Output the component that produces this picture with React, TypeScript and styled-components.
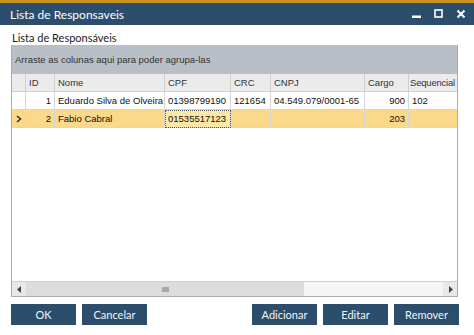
import styled, { createGlobalStyle } from "styled-components";

type Person = {
  id: number;
  nome: string;
  cpf: string;
  crc: string;
  cnpj: string;
  cargo: string;
  sequencial: string;
};

const people: Person[] = [
  {
    id: 1,
    nome: "Eduardo Silva de Olveira",
    cpf: "01398799190",
    crc: "121654",
    cnpj: "04.549.079/0001-65",
    cargo: "900",
    sequencial: "102",
  },
  {
    id: 2,
    nome: "Fabio Cabral",
    cpf: "01535517123",
    crc: "",
    cnpj: "",
    cargo: "203",
    sequencial: "",
  },
];

const COLS = "14px 29px 110px 66px 40px 94px 44px 1fr";

function App() {
  return (
    <>
      <GlobalStyle />
      <Window>
        <TitleBar>
          <Title>Lista de Responsaveis</Title>
          <WindowControls>
            <ControlButton aria-label="minimizar">
              <svg width="10" height="10" viewBox="0 0 10 10">
                <rect x="0" y="6.5" width="9" height="2.5" fill="#fff" />
              </svg>
            </ControlButton>
            <ControlButton aria-label="maximizar">
              <svg width="10" height="10" viewBox="0 0 10 10">
                <rect x="1" y="1" width="7" height="7" fill="none" stroke="#fff" strokeWidth="1.6" />
              </svg>
            </ControlButton>
            <ControlButton aria-label="fechar">
              <svg width="10" height="10" viewBox="0 0 10 10">
                <path d="M1.5 1.5 L8.5 8.5 M8.5 1.5 L1.5 8.5" stroke="#fff" strokeWidth="2" />
              </svg>
            </ControlButton>
          </WindowControls>
        </TitleBar>
        <Body>
          <Caption>Lista de Responsáveis</Caption>
          <Grid>
            <GroupPanel>Arraste as colunas aqui para poder agrupa-las</GroupPanel>
            <HeaderRow>
              <HeaderCell />
              <HeaderCell>ID</HeaderCell>
              <HeaderCell>Nome</HeaderCell>
              <HeaderCell>CPF</HeaderCell>
              <HeaderCell>CRC</HeaderCell>
              <HeaderCell>CNPJ</HeaderCell>
              <HeaderCell>Cargo</HeaderCell>
              <HeaderCell>Sequencial</HeaderCell>
            </HeaderRow>
            {people.map((p, i) => {
              const selected = i === 1;
              return (
                <DataRow key={p.id} $selected={selected}>
                  <Indicator>
                    {selected && (
                      <svg width="6" height="8" viewBox="0 0 6 8">
                        <path d="M1 1 L4.5 4 L1 7" fill="none" stroke="#333" strokeWidth="1.6" />
                      </svg>
                    )}
                  </Indicator>
                  <Cell $right>{p.id}</Cell>
                  <Cell>{p.nome}</Cell>
                  <Cell $focused={selected}>{p.cpf}</Cell>
                  <Cell>{p.crc}</Cell>
                  <Cell>{p.cnpj}</Cell>
                  <Cell $right>{p.cargo}</Cell>
                  <Cell>{p.sequencial}</Cell>
                </DataRow>
              );
            })}
            <EmptyArea />
            <HScroll>
              <ScrollArrow>
                <svg width="5" height="7" viewBox="0 0 5 7">
                  <path d="M4 0 L0 3.5 L4 7 Z" fill="#444" />
                </svg>
              </ScrollArrow>
              <ScrollThumb>
                <Grip />
              </ScrollThumb>
              <ScrollTrack />
              <ScrollArrow>
                <svg width="5" height="7" viewBox="0 0 5 7">
                  <path d="M1 0 L5 3.5 L1 7 Z" fill="#444" />
                </svg>
              </ScrollArrow>
            </HScroll>
          </Grid>
          <Footer>
            <ButtonGroup>
              <Button>OK</Button>
              <Button>Cancelar</Button>
            </ButtonGroup>
            <ButtonGroup>
              <Button>Adicionar</Button>
              <Button>Editar</Button>
              <Button>Remover</Button>
            </ButtonGroup>
          </Footer>
        </Body>
      </Window>
    </>
  );
}

const GlobalStyle = createGlobalStyle`
  html, body {
    margin: 0;
    padding: 0;
    background: #fff;
  }
  body {
    font-family: "Liberation Sans", Arial, sans-serif;
  }
`;

const Window = styled.div`
  width: 474px;
  height: 335px;
  display: flex;
  flex-direction: column;
  background: #fff;
  overflow: hidden;
`;

const TitleBar = styled.div`
  height: 22px;
  border-top: 3px solid #c8931e;
  background: #2c4d6c;
  display: flex;
  align-items: center;
  justify-content: space-between;
  padding: 0 8px 0 10px;
`;

const Title = styled.div`
  color: #fff;
  font-family: Lato, "Noto Sans", sans-serif;
  font-size: 12px;
`;

const WindowControls = styled.div`
  display: flex;
  align-items: center;
  gap: 12px;
`;

const ControlButton = styled.div`
  width: 10px;
  height: 10px;
  display: flex;
`;

const Body = styled.div`
  flex: 1;
  display: flex;
  flex-direction: column;
  padding: 6px 16px 10px 11px;
`;

const Caption = styled.div`
  font-family: Lato, "Noto Sans", sans-serif;
  font-size: 11px;
  color: #222;
  height: 14px;
  line-height: 14px;
  padding-left: 1px;
`;

const Grid = styled.div`
  height: 251px;
  display: flex;
  flex-direction: column;
  border: 1px solid #a9acaf;
  border-top: none;
  font-size: 9.5px;
  color: #111;
`;

const GroupPanel = styled.div`
  height: 29px;
  background: #b9bfc6;
  color: #333;
  display: flex;
  align-items: center;
  padding-left: 3px;
`;

const RowBase = styled.div`
  display: grid;
  grid-template-columns: ${COLS};
  height: 18px;
`;

const HeaderRow = styled(RowBase)`
  background: #ebebeb;
`;

const HeaderCell = styled.div`
  border-right: 1px solid #cfcfcf;
  border-bottom: 1px solid #cfcfcf;
  padding: 0 3px;
  display: flex;
  align-items: center;
  white-space: nowrap;
  overflow: hidden;
  color: #333;
  &:last-child {
    border-right: none;
    padding: 0 1px;
    letter-spacing: -0.2px;
  }
`;

const DataRow = styled(RowBase)<{ $selected?: boolean }>`
  background: ${(p) => (p.$selected ? "#fbd98b" : "#fff")};
`;

const Cell = styled.div<{ $right?: boolean; $focused?: boolean }>`
  border-right: 1px solid #d6d6d6;
  border-bottom: 1px solid #d6d6d6;
  padding: 0 3px;
  display: flex;
  align-items: center;
  justify-content: ${(p) => (p.$right ? "flex-end" : "flex-start")};
  white-space: nowrap;
  overflow: hidden;
  ${(p) =>
    p.$focused &&
    `
    background: #fde7a6;
    outline: 1px dotted #555;
    outline-offset: -1px;
  `}
  &:last-child {
    border-right: none;
  }
`;

const Indicator = styled.div`
  border-right: 1px solid #d6d6d6;
  border-bottom: 1px solid #d6d6d6;
  display: flex;
  align-items: center;
  justify-content: center;
`;

const EmptyArea = styled.div`
  flex: 1;
  background: #fff;
`;

const HScroll = styled.div`
  height: 14px;
  display: flex;
  background: #f0f0f0;
  border-top: 1px solid #d0d0d0;
`;

const ScrollArrow = styled.div`
  width: 14px;
  display: flex;
  align-items: center;
  justify-content: center;
  background: #e8e8e8;
`;

const ScrollThumb = styled.div`
  width: 278px;
  background: #dcdcdc;
  display: flex;
  align-items: center;
  justify-content: center;
`;

const Grip = styled.div`
  width: 7px;
  height: 5px;
  background-image: radial-gradient(circle, #a8a8a8 0.8px, transparent 1px);
  background-size: 2px 2px;
`;

const ScrollTrack = styled.div`
  flex: 1;
  background: #f5f5f5;
`;

const Footer = styled.div`
  display: flex;
  justify-content: space-between;
  margin-top: 7px;
  margin-right: -1px;
`;

const ButtonGroup = styled.div`
  display: flex;
  gap: 6px;
`;

const Button = styled.div`
  width: 65px;
  height: 21px;
  background: #2c4d6c;
  color: #f2f4f6;
  font-family: Lato, "Noto Sans", sans-serif;
  font-size: 11px;
  display: flex;
  align-items: center;
  justify-content: center;
`;

export default App;
